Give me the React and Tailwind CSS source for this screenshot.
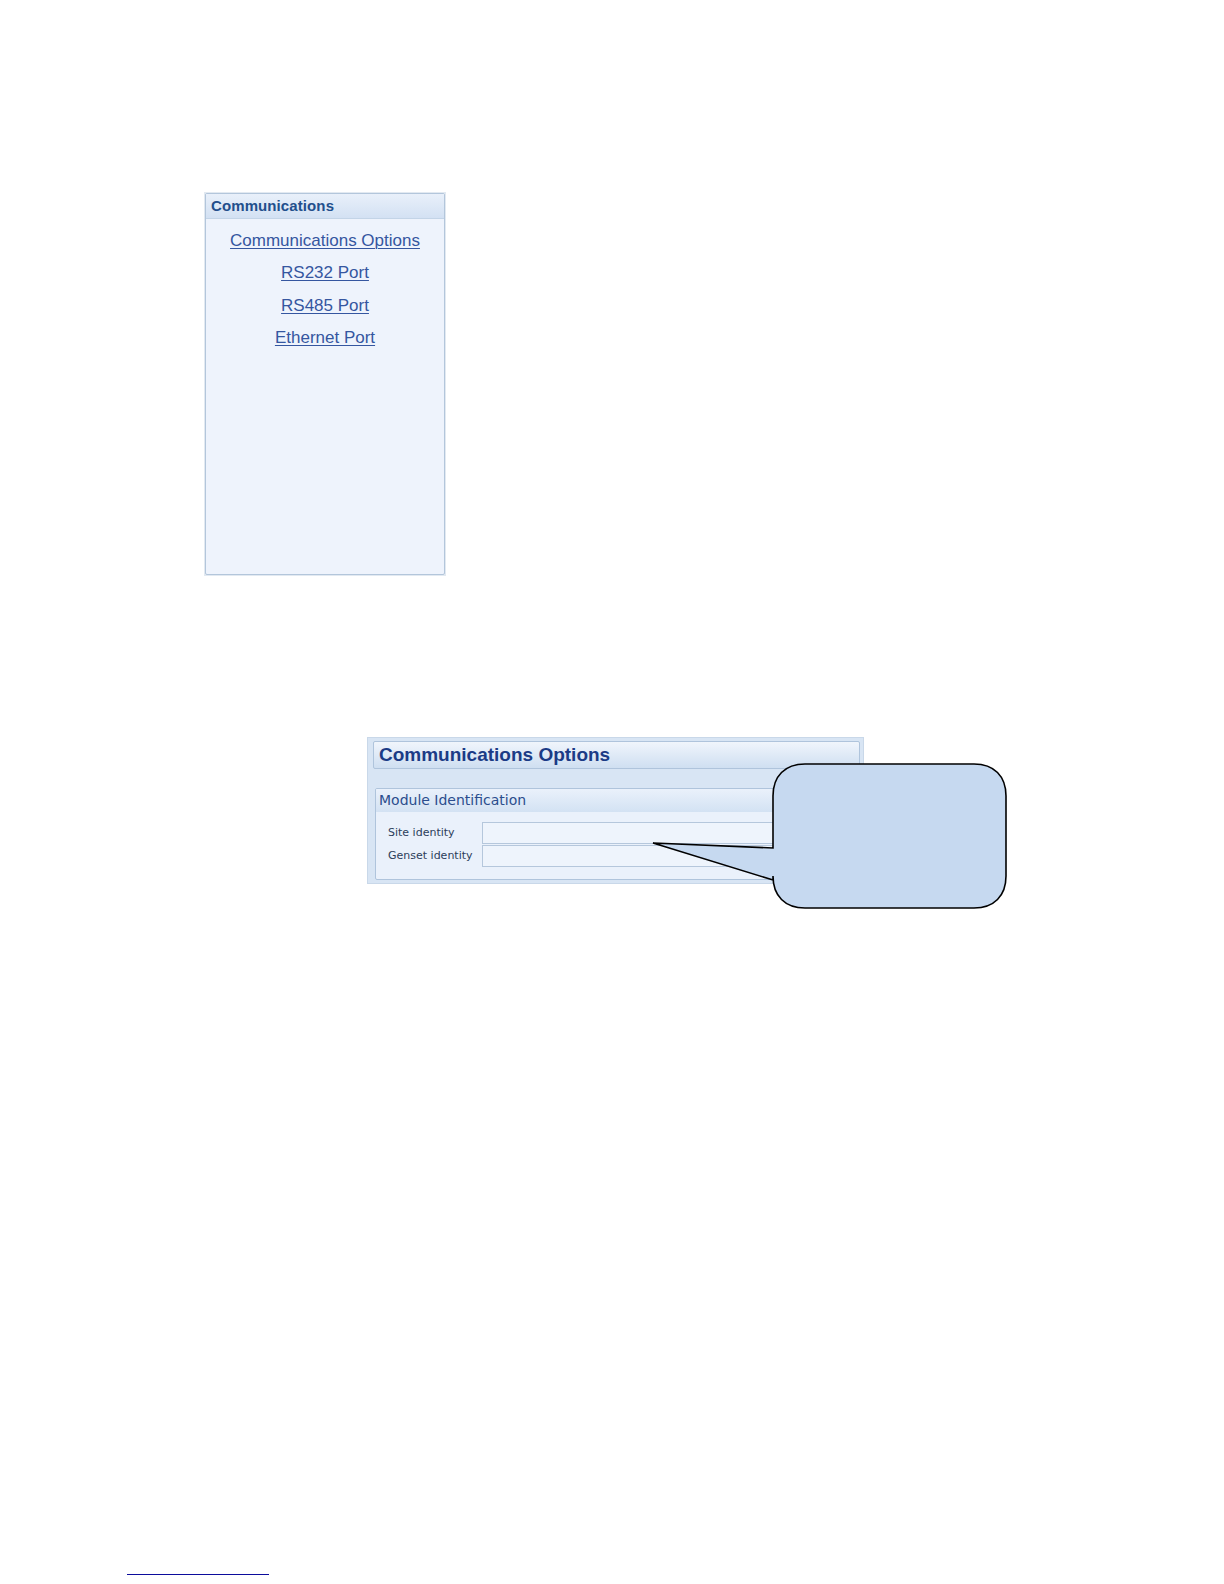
import React from 'react';

const links = ['Communications Options', 'RS232 Port', 'RS485 Port', 'Ethernet Port'];

function NavPanel() {
  return (
    <div className="ml-[204px] w-[242px] h-[384px] p-px bg-[#e2e9f1]">
      <div className="h-full flex flex-col border border-[#b3c6db] rounded-[2px] bg-[#eef3fc]">
        {/* header */}
        <div className="h-[25px] flex items-center px-[5px] bg-gradient-to-b from-[#e9f0fa] to-[#d3e1f3] border-b border-[#c3d4e7]">
          <span className="text-[15px] font-bold tracking-[0.1px] text-[#234f8c] font-['Liberation_Sans',Arial,sans-serif]">
            Communications
          </span>
        </div>
        <div className="flex flex-col items-center gap-[12.4px] pt-[12px] font-['Liberation_Sans',Arial,sans-serif]">
          {links.map((l) => (
            <a
              key={l}
              href="#"
              className="text-[17px] leading-[20px] text-[#3556a0] underline underline-offset-[2px] decoration-1"
            >
              {l}
            </a>
          ))}
        </div>
      </div>
    </div>
  );
}

function Field({ label }) {
  return (
    <div className="flex items-center">
      <span className="w-[94px] text-[11px] text-[#2c3e5a] font-['DejaVu_Sans',Verdana,sans-serif]">{label}</span>
      <div className="w-[370px] h-[22px] border border-[#b5c7dc] bg-[#eef4fc]" />
    </div>
  );
}

function OptionsPanel() {
  return (
    <div className="ml-[367px] w-[497px] h-[147px] bg-[#d8e5f4] border border-[#c9d8e9] pt-[3px] pl-[5px] pr-[3px]">
      {/* title bar */}
      <div className="h-[28px] flex items-center px-[5px] rounded-[2px] border border-[#afc4dc] bg-gradient-to-b from-[#f0f5fc] to-[#cfdff1]">
        <span className="text-[19px] font-bold text-[#1b3b86] font-['Liberation_Sans',Arial,sans-serif]">
          Communications Options
        </span>
      </div>
      {/* group */}
      <div className="mt-[19px] ml-[2px] w-[484px] h-[92px] flex flex-col rounded-[2px] border border-[#afc4dc] bg-[#eaf1fb] overflow-hidden">
        <div className="h-[23px] flex items-center px-[3px] bg-gradient-to-b from-[#eaf1fb] to-[#d3e2f3]">
          <span className="text-[14px] text-[#2b4d8d] font-['DejaVu_Sans',Verdana,sans-serif]">Module Identification</span>
        </div>
        <div className="flex flex-col gap-[1px] pt-[10px] pl-[12px]">
          <Field label="Site identity" />
          <Field label="Genset identity" />
        </div>
      </div>
    </div>
  );
}

function Callout() {
  return (
    <svg className="absolute left-[640px] top-[755px]" width="372" height="160" viewBox="0 0 372 160">
      <path
        d="M 165 9 H 334 C 354 9 366 21 366 41 V 121 C 366 141 354 153 334 153 H 165 C 145 153 133 141 133 121 V 125 L 13 88 L 133 93 V 41 C 133 21 145 9 165 9 Z"
        fill="#c6d9f0"
        stroke="#000"
        strokeWidth="1.6"
        strokeLinejoin="miter"
      />
    </svg>
  );
}

export default function App() {
  return (
    <div className="relative w-[1224px] h-[1584px] bg-white overflow-hidden">
      <div className="pt-[192px]">
        <NavPanel />
      </div>
      <div className="pt-[161px]">
        <OptionsPanel />
      </div>
      <Callout />
      {/* footnote rule */}
      <div className="absolute left-[127px] top-[1574px] w-[142px] h-px bg-[#0c0c9c]" />
    </div>
  );
}
